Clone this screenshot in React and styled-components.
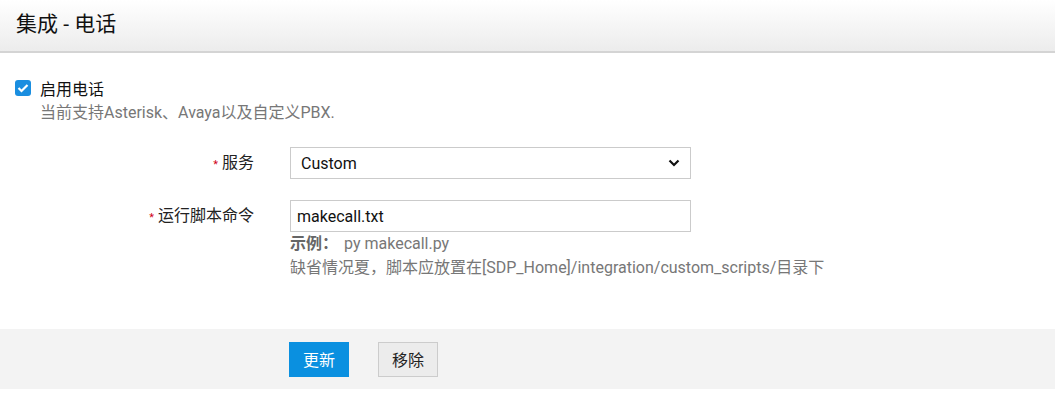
import React from "react";
import styled, { createGlobalStyle } from "styled-components";

const GlobalStyle = createGlobalStyle`
    body {
        margin: 0;
        background: #fff;
        font-family: Roboto, "Noto Sans CJK SC", sans-serif;
        color: #222;
    }
`

const Header = styled.div`
    height: 53px;
    padding-left: 16px;
    display: flex;
    align-items: center;
    background: linear-gradient(#ffffff, #ececec);
    border-bottom: 2px solid #d4d4d4;
    box-sizing: border-box;

    h1 {
        margin: 0;
        font-size: 21px;
        font-weight: 400;
        color: #111;
        margin-top: -8px;
    }
`

const Enable = styled.div`
    padding: 26px 0 0 15px;
`

const CheckRow = styled.label`
    display: flex;
    align-items: center;
    gap: 9px;
    font-size: 16px;
    color: #111;
    height: 18px;
`

const Check = styled.span`
    width: 16px;
    height: 16px;
    border-radius: 3px;
    background: #1a8ee0;
    display: flex;
    align-items: center;
    justify-content: center;
`

const Hint = styled.div`
    margin: 6px 0 0 25px;
    font-size: 16px;
    line-height: 20px;
    color: #777;
`

const Form = styled.div`
    padding-top: 24px;
    display: grid;
    grid-template-columns: 254px 401px;
    column-gap: 36px;
    row-gap: 21px;
    padding-bottom: 49px;
`

const Label = styled.div`
    font-size: 16px;
    color: #222;
    text-align: right;
    height: 32px;
    line-height: 32px;

    span {
        color: #d0021b;
        font-size: 11px;
        margin-right: 4px;
    }
`

const Field = styled.div`
    height: 32px;
    border: 1px solid #cbcbcb;
    box-sizing: border-box;
    display: flex;
    align-items: center;
    justify-content: space-between;
    padding: 0 ${p => p.$pad}px;
    font-size: 16px;
    color: #111;
`

const Help = styled.div`
    font-size: 16px;
    color: #777;
    line-height: 24px;
    white-space: nowrap;

    b {
        color: #666;
        margin-right: 6px;
    }
`

const Footer = styled.div`
    background: #f3f3f3;
    height: 60px;
    display: flex;
    align-items: center;
    padding-left: 289px;
    gap: 29px;
`

const Button = styled.button`
    width: 60px;
    height: 35px;
    font-family: inherit;
    font-size: 16px;
    border: 1px solid ${p => (p.$primary ? "#0a90e0" : "#cccccc")};
    background: ${p => (p.$primary ? "#0a90e0" : "#ececec")};
    color: ${p => (p.$primary ? "#fff" : "#222")};
    padding: 0;
`

const App = () => (
    <div>
        <GlobalStyle />
        <Header>
            <h1>集成 - 电话</h1>
        </Header>
        <Enable>
            <CheckRow>
                <Check>
                    <svg width="12" height="10" viewBox="0 0 12 10">
                        <path d="M1.5 5 L4.5 8 L10.5 2" stroke="#fff" strokeWidth="2.2" fill="none" />
                    </svg>
                </Check>
                启用电话
            </CheckRow>
            <Hint>当前支持Asterisk、Avaya以及自定义PBX.</Hint>
        </Enable>
        <Form>
            <Label><span>*</span>服务</Label>
            <Field $pad={10}>
                Custom
                <svg width="12" height="8" viewBox="0 0 12 8">
                    <path d="M1.5 1.5 L6 6 L10.5 1.5" stroke="#111" strokeWidth="2.2" fill="none" />
                </svg>
            </Field>
            <Label><span>*</span>运行脚本命令</Label>
            <div>
                <Field $pad={6}>makecall.txt</Field>
                <Help>
                    <div><b>示例：</b>py makecall.py</div>
                    <div>缺省情况夏，脚本应放置在[SDP_Home]/integration/custom_scripts/目录下</div>
                </Help>
            </div>
        </Form>
        <Footer>
            <Button $primary>更新</Button>
            <Button>移除</Button>
        </Footer>
    </div>
);

export default App;
